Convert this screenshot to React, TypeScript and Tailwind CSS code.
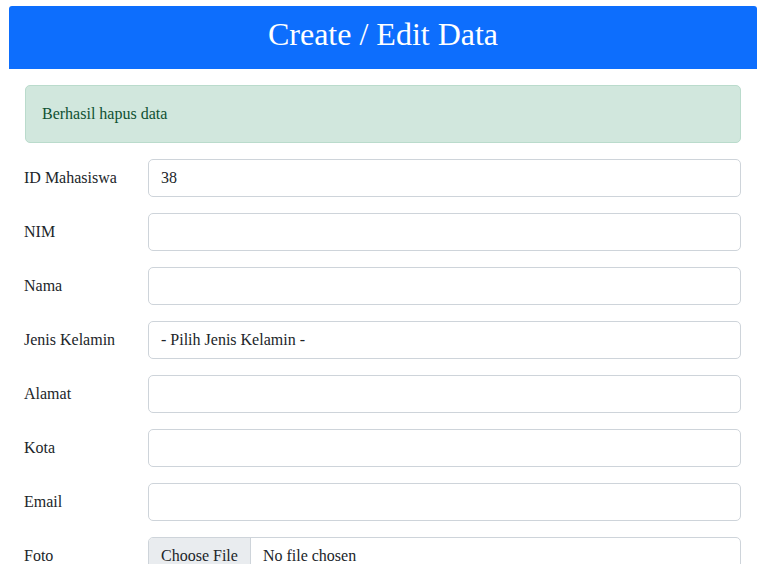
import React from 'react';

const fields = [
  { label: 'ID Mahasiswa', value: '38' },
  { label: 'NIM', value: '' },
  { label: 'Nama', value: '' },
  { label: 'Jenis Kelamin', value: '- Pilih Jenis Kelamin -' },
  { label: 'Alamat', value: '' },
  { label: 'Kota', value: '' },
  { label: 'Email', value: '' },
];

export default function App() {
  return (
    <div className="min-h-screen bg-white pt-[6px] px-[9px] font-['Liberation_Serif',serif] text-[#212529]">
      <div className="w-[748px]">
        <div className="h-[63px] pb-[7px] bg-[#0d6efd] rounded-t-[3px] flex items-center justify-center">
          <h1 className="text-white text-[32px] leading-none">Create / Edit Data</h1>
        </div>
        <div className="px-4 pt-4">
          <div className="h-[58px] mb-4 flex items-center px-4 bg-[#d1e7dd] border border-[#badbcc] rounded-[5px] text-[#0f5132] text-[16px]">
            Berhasil hapus data
          </div>
          {fields.map((f) => (
            <div key={f.label} className="flex items-center mb-4">
              <label className="w-[124px] -ml-px text-[16px]">{f.label}</label>
              <div className="flex-1 h-[38px] border border-[#ced4da] rounded-[5px] flex items-center px-3 text-[16px] bg-white">
                {f.value}
              </div>
            </div>
          ))}
          <div className="flex items-center">
            <label className="w-[124px] -ml-px text-[16px]">Foto</label>
            <div className="flex-1 h-[38px] border border-[#ced4da] rounded-[5px] flex items-stretch text-[16px] overflow-hidden">
              <span className="bg-[#e9ecef] border-r border-[#ced4da] px-3 flex items-center">Choose File</span>
              <span className="px-3 flex items-center">No file chosen</span>
            </div>
          </div>
        </div>
      </div>
    </div>
  );
}
